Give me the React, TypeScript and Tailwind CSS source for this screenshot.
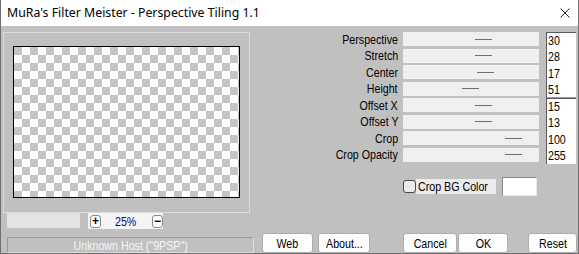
const params = [
  { label: "Perspective", value: 30, pos: 72 },
  { label: "Stretch", value: 28, pos: 72 },
  { label: "Center", value: 17, pos: 74 },
  { label: "Height", value: 51, pos: 59 },
  { label: "Offset X", value: 15, pos: 72 },
  { label: "Offset Y", value: 13, pos: 72 },
  { label: "Crop", value: 100, pos: 102 },
  { label: "Crop Opacity", value: 255, pos: 102 },
];

// the dialog font is a narrow sans; squeeze Liberation Sans to match
function Narrow({ children, origin = "origin-center" }: { children: React.ReactNode; origin?: string }) {
  return <span className={"inline-block whitespace-nowrap scale-x-[0.82] " + origin}>{children}</span>;
}

function Button({ label, className }: { label: string; className: string }) {
  return (
    <button
      className={
        "flex h-[20px] items-center justify-center rounded-[3px] border border-[#adadad] bg-[#fdfdfd] text-[13px] " +
        className
      }
    >
      <Narrow>{label}</Narrow>
    </button>
  );
}

export default function App() {
  return (
    <div className="flex h-[254px] w-[579px] flex-col border-x border-b border-[#6f6f6f] bg-[#c0c0c0] font-['Liberation_Sans',sans-serif] text-[13px] leading-none text-black">
      {/* title bar */}
      <div className="flex h-[26px] shrink-0 items-center justify-between bg-white pl-[6px] pr-[8px] font-['Noto_Sans',sans-serif] text-[12.3px]">
        <span>MuRa's Filter Meister - Perspective Tiling 1.1</span>
        <svg width="10" height="10" viewBox="0 0 10 10" className="text-[#222]">
          <path d="M0.5 0.5 L9.5 9.5 M9.5 0.5 L0.5 9.5" stroke="currentColor" strokeWidth="1" />
        </svg>
      </div>

      <div className="flex flex-1">
        {/* preview column */}
        <div className="flex w-[253px] shrink-0 flex-col pt-[6px]">
          <div className="ml-[2px] h-[181px] w-[247px] border border-[#dcdcdc] pl-[9px] pt-[13px]">
            <div className="h-[152px] w-[227px] border border-black bg-[conic-gradient(#fff_25%,#c4c4c4_0_50%,#fff_0_75%,#c4c4c4_0)] bg-[length:16px_16px]" />
          </div>
          <div className="flex items-start">
            <div className="ml-[6px] h-[15px] w-[73px] bg-[#e3e3e3]" />
            <div className="ml-[8px] flex h-[16px] w-[75px] items-center bg-[#f4f4f4] pl-[2px]">
              <span className="flex h-[13px] w-[11px] items-center justify-center rounded-[3px] border border-[#8a8a8a] bg-white text-[12px] font-bold">
                +
              </span>
              <span className="ml-[14px] w-[24px] text-[#000080]">
                <Narrow origin="origin-left">25%</Narrow>
              </span>
              <span className="ml-[13px] flex h-[13px] w-[11px] items-center justify-center rounded-[3px] border border-[#8a8a8a] bg-white text-[12px] font-bold">
                −
              </span>
            </div>
          </div>
          <div className="ml-[6px] mt-[8px] flex h-[16px] w-[247px] items-center justify-center border border-b-[#dedede] border-l-[#9a9a9a] border-r-[#dedede] border-t-[#9a9a9a] text-[#f6f6f6]">
            <Narrow>Unknown Host ("9PSP")</Narrow>
          </div>
        </div>

        {/* controls column */}
        <div className="flex flex-1 flex-col pt-[6px]">
          <div className="flex flex-col">
            {params.map((p, i) => (
              <div key={p.label} className="flex h-[16.5px] items-start">
                <div className="flex h-[14px] w-[144px] items-center justify-end">
                  <Narrow origin="origin-right">{p.label}</Narrow>
                </div>
                <div className="ml-[5px] flex h-[14px] w-[136px] items-center bg-[#efefef]">
                  <div className="h-px w-[17px] bg-[#6e6e6e]" style={{ marginLeft: p.pos }} />
                </div>
                <div
                  className={
                    "ml-[7px] flex h-[16.5px] w-[30px] items-center border-l border-l-[#5a5a5a] bg-white pl-[1px] " +
                    (i === 0 || i === 4 ? "border-t border-t-[#5a5a5a] " : "") +
                    (i === 3 ? "border-b border-b-[#9a9a9a] " : "")
                  }
                >
                  <Narrow origin="origin-left">{p.value}</Narrow>
                </div>
              </div>
            ))}
          </div>

          <div className="mt-[13px] flex items-center pl-[149px]">
            <div className="h-[13px] w-[13px] rounded-[3px] border border-[#4a4a4a] bg-[#ececec]" />
            <div className="flex h-[15px] w-[80px] items-center bg-[#ececec] pl-[2px]">
              <Narrow origin="origin-left">Crop BG Color</Narrow>
            </div>
            <div className="ml-[6px] h-[19px] w-[35px] border border-b-[#e8e8e8] border-l-[#8a8a8a] border-r-[#e8e8e8] border-t-[#8a8a8a] bg-white" />
          </div>

          <div className="mt-auto flex">
            <Button label="Web" className="ml-[8px] w-[51px]" />
            <Button label="About..." className="ml-[5px] w-[52px]" />
            <Button label="Cancel" className="ml-[33px] w-[54px]" />
            <Button label="OK" className="ml-[1px] w-[50px]" />
            <Button label="Reset" className="ml-[20px] w-[49px]" />
          </div>
        </div>
      </div>
    </div>
  );
}
